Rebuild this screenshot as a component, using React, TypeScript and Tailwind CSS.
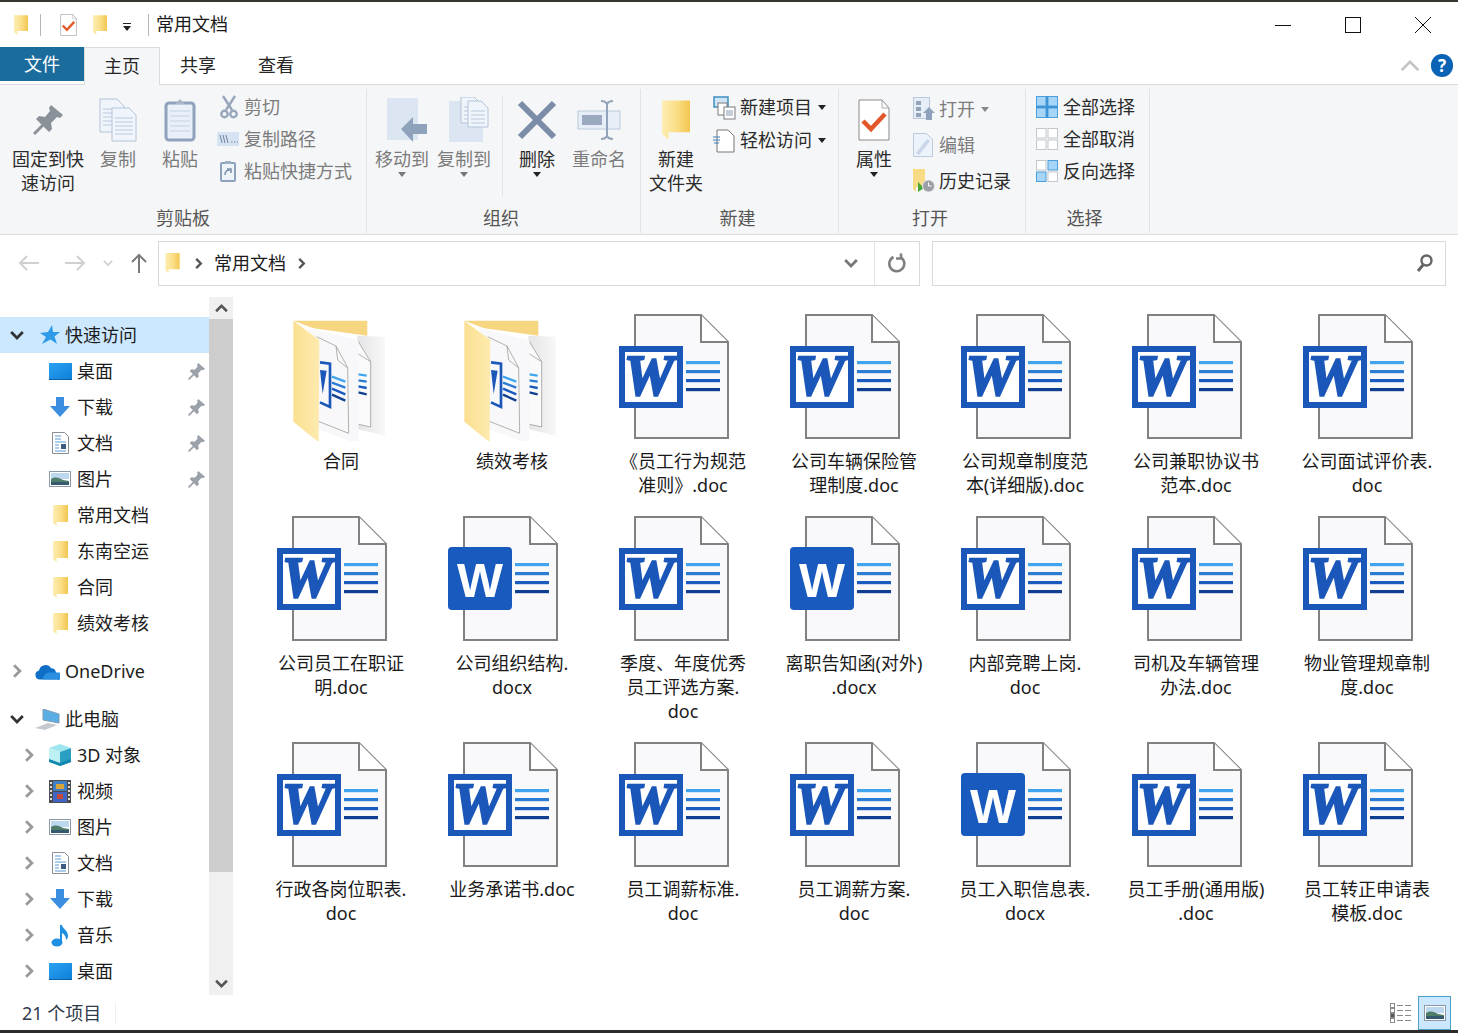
import type { ReactNode } from "react";

const files = [
  "合同",
  "绩效考核",
  "《员工行为规范\n准则》.doc",
  "公司车辆保险管\n理制度.doc",
  "公司规章制度范\n本(详细版).doc",
  "公司兼职协议书\n范本.doc",
  "公司面试评价表.\ndoc",
  "公司员工在职证\n明.doc",
  "公司组织结构.\ndocx",
  "季度、年度优秀\n员工评选方案.\ndoc",
  "离职告知函(对外)\n.docx",
  "内部竞聘上岗.\ndoc",
  "司机及车辆管理\n办法.doc",
  "物业管理规章制\n度.doc",
  "行政各岗位职表.\ndoc",
  "业务承诺书.doc",
  "员工调薪标准.\ndoc",
  "员工调薪方案.\ndoc",
  "员工入职信息表.\ndocx",
  "员工手册(通用版)\n.doc",
  "员工转正申请表\n模板.doc",
];

const Chev = ({ dir, size = 12, color = "#8a8a8a", width = 2 }: { dir: "up" | "down" | "right"; size?: number; color?: string; width?: number }) => (
  <svg width={size} height={size} viewBox="0 0 12 12" fill="none" stroke={color} strokeWidth={width}>
    {dir === "up" && <polyline points="1,8.5 6,3.5 11,8.5" />}
    {dir === "down" && <polyline points="1,3.5 6,8.5 11,3.5" />}
    {dir === "right" && <polyline points="3.5,1 8.5,6 3.5,11" />}
  </svg>
);

const Folder = ({ w = 15, h = 21 }: { w?: number; h?: number }) => (
  <svg width={w} height={h} viewBox="0 0 15 21">
    <defs>
      <linearGradient id="fold" x1="0" x2="1" y1="0" y2="0">
        <stop offset="0" stopColor="#fdeeb4" />
        <stop offset="0.55" stopColor="#fadd85" />
        <stop offset="1" stopColor="#f3c64f" />
      </linearGradient>
    </defs>
    <polygon points="0,0 15,0 15,17 3.5,17 3.5,21 0,18" fill="url(#fold)" />
  </svg>
);

const Pin = ({ size = 30, color = "#8b9199" }: { size?: number; color?: string }) => (
  <svg width={size} height={size} viewBox="0 0 30 30">
    <polygon points="18,0 30,10 27,13 24,12 18,18 19,24 16,27 3,14 6,11 12,12 17,6 16,3" fill={color} />
    <line x1="1" y1="29" x2="10" y2="20" stroke={color} strokeWidth="3" />
  </svg>
);

const Page = ({ x, y, w, h }: { x: number; y: number; w: number; h: number }) => (
  <g>
    <path d={`M${x} ${y}h${w - 7}l7 7v${h - 7}h-${w}z`} fill="#f0f5fb" stroke="#b4c3d8" />
    {[10, 14, 18, 22, 26, 30].filter((o) => o < h - 3).map((o) => (
      <line key={o} x1={x + 3} x2={x + w - 3} y1={y + o} y2={y + o} stroke="#b9c8dc" />
    ))}
  </g>
);

const CopyIcon = () => (
  <svg width="38" height="44" viewBox="0 0 38 44">
    <Page x={1} y={1} w={24} h={33} />
    <Page x={13} y={10} w={24} h={33} />
  </svg>
);

const PasteIcon = () => (
  <svg width="32" height="44" viewBox="0 0 32 44">
    <rect x="2" y="5" width="28" height="37" rx="3" fill="#e9f0f9" stroke="#8fa2bc" strokeWidth="3" />
    <path d="M11 6l5-5 5 5z" fill="#a9b7ca" />
    {[13, 18, 23, 28, 33].map((y) => (
      <line key={y} x1="6" x2="26" y1={y} y2={y} stroke="#c3d1e3" />
    ))}
  </svg>
);

const CutIcon = () => (
  <svg width="18" height="24" viewBox="0 0 18 24" fill="none" stroke="#97a6ba" strokeWidth="2.4">
    <line x1="3" y1="1" x2="12" y2="15" />
    <line x1="15" y1="1" x2="6" y2="15" />
    <circle cx="4.5" cy="19" r="3.2" />
    <circle cx="13.5" cy="19" r="3.2" />
  </svg>
);

const CopyPathIcon = () => (
  <svg width="22" height="14" viewBox="0 0 22 14">
    <rect width="22" height="14" fill="#d6e3f2" />
    <path d="M3 3l2 8M6 3l2 8M9 3l2 8" stroke="#6f83a0" strokeWidth="1" />
    <path d="M14 10h1.5M17 10h1.5M20 10h1" stroke="#6f83a0" />
  </svg>
);

const PasteLinkIcon = () => (
  <svg width="16" height="22" viewBox="0 0 16 22">
    <rect x="1" y="3" width="14" height="18" rx="1" fill="#eef3fa" stroke="#8fa2bc" strokeWidth="2" />
    <path d="M5 1h6v3H5z" fill="#9fb0c6" />
    <path d="M5 15c0-3 2-5 5-5M7 9h4v4" fill="none" stroke="#7f92ad" strokeWidth="1.6" />
  </svg>
);

const MoveIcon = () => (
  <svg className="ml-[10px]" width="42" height="46" viewBox="0 0 42 46">
    <rect x="1" y="1" width="31" height="42" fill="#dce6f3" />
    <polygon points="15,32 27,20 27,27 41,27 41,37 27,37 27,45" fill="#8fa2bc" />
  </svg>
);

const CopyToIcon = () => (
  <svg className="ml-[10px]" width="42" height="46" viewBox="0 0 42 46">
    <rect x="1" y="4" width="34" height="41" fill="#dce6f3" />
    <Page x={13} y={0} w={20} h={26} />
    <Page x={20} y={4} w={20} h={26} />
  </svg>
);

const DeleteIcon = () => (
  <svg width="40" height="40" viewBox="0 0 40 40" stroke="#7b8ca8" strokeWidth="6">
    <line x1="3" y1="3" x2="37" y2="37" />
    <line x1="37" y1="3" x2="3" y2="37" />
  </svg>
);

const RenameIcon = () => (
  <svg width="44" height="40" viewBox="0 0 44 40">
    <rect x="1" y="11" width="42" height="18" fill="#e7eef7" stroke="#bccadc" />
    <rect x="5" y="15" width="20" height="10" fill="#9aa9c0" />
    <path d="M24 1c3 0 5 1 6 3 1-2 3-3 6-3M24 39c3 0 5-1 6-3 1 2 3 3 6 3M30 4v32" fill="none" stroke="#93a3b9" strokeWidth="2" />
  </svg>
);

const NewItemIcon = () => (
  <svg width="24" height="24" viewBox="0 0 24 24">
    <rect x="1" y="1" width="14" height="10" fill="#cfe4f5" stroke="#3f8fc0" strokeWidth="1.5" />
    <rect x="5" y="7" width="9" height="12" fill="#fff" stroke="#7b7b7b" />
    <rect x="11" y="11" width="11" height="12" fill="#fff" stroke="#7b7b7b" />
    <path d="M13 15h7M13 17h7M13 19h7" stroke="#8a9bb0" />
  </svg>
);

const EasyAccessIcon = () => (
  <svg width="22" height="24" viewBox="0 0 22 24">
    <path d="M4 1h11l6 6v16H4z" fill="#fff" stroke="#777" />
    <path d="M0 8h7M0 11h7M1 14h5" stroke="#3a7fb5" />
  </svg>
);

const CheckDoc = ({ w = 32, h = 42 }: { w?: number; h?: number }) => (
  <svg width={w} height={h} viewBox="0 0 32 42">
    <path d="M1 1h23l7 8v32H1z" fill="#fff" stroke="#8a8a8a" />
    <path d="M24 1v8h7" fill="none" stroke="#a8a8a8" />
    <polyline points="5,22 13,30 27,15" fill="none" stroke="#e2582a" strokeWidth="4.5" />
  </svg>
);

const OpenIcon = () => (
  <svg width="22" height="24" viewBox="0 0 22 24">
    <rect x="0.5" y="0.5" width="16" height="21" fill="#e6eef8" stroke="#b9c8dc" />
    <path d="M3 4h5v4H3zM3 10h5v4H3zM3 16h5v4H3z" fill="#93a3b9" />
    <polygon points="10,16 16,10 22,16 19,16 19,23 13,23 13,16" fill="#8fa2bc" />
  </svg>
);

const EditIcon = () => (
  <svg width="20" height="24" viewBox="0 0 20 24">
    <path d="M0.5 0.5h13l6 6v17h-19z" fill="#edf3fa" stroke="#bccadc" />
    <path d="M3 20l11-14 3 2-11 14z" fill="#c9d7e8" />
  </svg>
);

const HistoryIcon = () => (
  <svg width="22" height="24" viewBox="0 0 22 24">
    <polygon points="0,0 12,0 12,18 3,18 3,23 0,20" fill="#f8dc85" />
    <polygon points="5,13 11,19 5,23" fill="#4ba63a" />
    <circle cx="15.5" cy="17" r="6" fill="#9b9fa5" stroke="#e8e8e8" />
    <path d="M15.5 13.5V17h3" stroke="#fff" fill="none" />
  </svg>
);

const SelectGrid = ({ on }: { on: number[] }) => (
  <svg width="22" height="22" viewBox="0 0 22 22">
    {[
      [0.5, 0.5],
      [12, 0.5],
      [0.5, 12],
      [12, 12],
    ].map(([x, y], i) => (
      <rect key={i} x={x} y={y} width="9.5" height="9.5" fill={on.includes(i) ? "#a6d5f8" : "#fff"} stroke={on.includes(i) ? "#4a9fdc" : "#c4c8cc"} />
    ))}
    {on.length === 4 && <path d="M11 0v22M0 11h22" stroke="#3d94d4" strokeWidth="2" />}
  </svg>
);

const Caret = ({ color = "#222" }: { color?: string }) => (
  <svg width="8" height="5" viewBox="0 0 8 5">
    <polygon points="0,0 8,0 4,5" fill={color} />
  </svg>
);

const Desktop = () => (
  <svg width="23" height="17" viewBox="0 0 23 17">
    <defs>
      <linearGradient id="desk" x1="0" x2="1" y1="0" y2="1">
        <stop offset="0" stopColor="#2aa2f4" />
        <stop offset="1" stopColor="#0f7fd8" />
      </linearGradient>
    </defs>
    <rect width="23" height="16" fill="url(#desk)" />
    <rect y="16" width="23" height="1" fill="#0b5fa8" />
  </svg>
);

const Download = () => (
  <svg width="20" height="20" viewBox="0 0 20 20">
    <polygon points="6,0 14,0 14,9 20,9 10,20 0,9 6,9" fill="#3c8fe0" />
  </svg>
);

const Docs = () => (
  <svg width="17" height="22" viewBox="0 0 17 22">
    <path d="M0.5 0.5h12l4 4v17h-16z" fill="#fff" stroke="#8b8f96" />
    <path d="M3 4h6M3 7h6M3 10h11M3 19h11M3 16h4M3 13h4" stroke="#5a9bd5" />
    <rect x="9" y="12" width="5" height="5" fill="#3d5a80" />
  </svg>
);

const Picture = () => (
  <svg width="22" height="16" viewBox="0 0 22 16">
    <rect x="0.5" y="0.5" width="21" height="15" fill="#fff" stroke="#8c98a6" />
    <rect x="2" y="2" width="18" height="6" fill="#bcd8ee" />
    <path d="M2 8c5-3 8-1 12 1l6 1v4H2z" fill="#4f7d68" />
    <rect x="2" y="11" width="18" height="3" fill="#355a70" />
  </svg>
);

const Star = () => (
  <svg className="ml-[5px]" width="20" height="20" viewBox="0 0 20 20">
    <polygon points="12,0 13,7 20,7 14.5,11.5 17,19 10.5,14.5 2,19 6,12 0,8 8,7" fill="#2f9be8" />
  </svg>
);

const Cloud = () => (
  <svg width="25" height="17" viewBox="0 0 25 17">
    <path d="M5 16.5a4.5 4.5 0 0 1-1-8.9A6.5 6.5 0 0 1 16 5.2a5 5 0 0 1 5 4.4 3.6 3.6 0 0 1 0 6.9z" fill="#0f6fc6" />
    <path d="M8 16.5c0-4 3-7 7-7h9.500a3.600 3.600 0 0 1-3.500 7z" fill="#2a8fe0" />
  </svg>
);

const Computer = () => (
  <svg width="25" height="21" viewBox="0 0 25 21">
    <polygon points="8,0 24,5 24,14 8,11" fill="#5aaee4" stroke="#7f9cb2" />
    <polygon points="0,19 13,14 22,16 10,21" fill="#c4c9cf" />
  </svg>
);

const Cube = () => (
  <svg width="22" height="22" viewBox="0 0 22 22">
    <polygon points="11,0 22,4 11,8 0,4" fill="#9fe6ef" />
    <polygon points="0,4 11,8 11,22 0,18" fill="#bdf0f3" />
    <polygon points="22,4 11,8 11,22 22,18" fill="#2a9fc2" />
    <polygon points="0,15 11,19 22,15 22,18 11,22 0,18" fill="#0e86ad" />
  </svg>
);

const Film = () => (
  <svg width="22" height="23" viewBox="0 0 22 23">
    <rect width="22" height="23" fill="#4b4b4b" />
    <rect x="4" y="1" width="14" height="10" fill="#3f7fc4" />
    <rect x="4" y="12" width="14" height="10" fill="#3f66c4" />
    <rect x="7" y="4" width="8" height="5" fill="#d8a53a" />
    <rect x="8" y="14" width="6" height="5" fill="#c64a3a" />
    {[2, 6, 10, 14, 18].map((y) => (
      <g key={y}>
        <rect x="1" y={y} width="2" height="2" fill="#ddd" />
        <rect x="19" y={y} width="2" height="2" fill="#ddd" />
      </g>
    ))}
  </svg>
);

const Music = () => (
  <svg width="18" height="23" viewBox="0 0 18 23">
    <ellipse cx="6" cy="18.500" rx="5.500" ry="4" fill="#1f8fe0" />
    <path d="M9 1h2c.5 4 6 5 6 11 0 2-1 3-2 4 0-4-2-6-4-7v10H9z" fill="#1f8fe0" />
  </svg>
);

const FolderBig = () => (
  <svg width="128" height="128" viewBox="21 24 384 384">
    <defs>
      <linearGradient id="flap" x1="0" x2="1" y1="0" y2="0">
        <stop offset="0" stopColor="#fbe092" />
        <stop offset="1" stopColor="#fdeaae" />
      </linearGradient>
      <linearGradient id="sheet" x1="0" x2="1" y1="0" y2="0">
        <stop offset="0" stopColor="#e4e4e6" />
        <stop offset="1" stopColor="#f8f8f9" />
      </linearGradient>
    </defs>
    <polygon points="70,47 292,47 292,92 130,70" fill="#f6d680" />
    <polygon points="262,92 345,95 345,392 262,372" fill="url(#sheet)" />
    <polygon points="110,68 262,105 302,170 302,366 262,356" fill="#fafafb" />
    <path d="M262 105l40 65v196l-36-8M262 105v40l40 25" fill="none" stroke="#8d8d85" strokeWidth="2" />
    {[
      [265, 208, 290, 212, "#41a5ee"],
      [265, 226, 290, 230, "#2b7cd3"],
      [265, 244, 290, 249, "#185abd"],
      [265, 262, 290, 268, "#103f91"],
    ].map(([x1, y1, x2, y2, c], i) => (
      <line key={i} x1={x1} y1={y1} x2={x2} y2={y2} stroke={c as string} strokeWidth="7" />
    ))}
    <polygon points="118,72 265,105 265,418 140,372" fill="#f8f8fa" />
    <path d="M140 95l58 28 35 65 3 197-96-38" fill="none" stroke="#8d8d85" strokeWidth="2" />
    <path d="M198 123l5 42 30 24" fill="none" stroke="#8d8d85" strokeWidth="2" />
    <path d="M150 172l30 4v130l-30-14" fill="none" stroke="#1b57b9" strokeWidth="8" />
    <path d="M150 195l20 2-12 70z" fill="#1b57b9" />
    {[
      [186, 215, 226, 230, "#41a5ee"],
      [186, 233, 226, 248, "#2b7cd3"],
      [186, 251, 226, 268, "#185abd"],
      [186, 269, 226, 287, "#103f91"],
    ].map(([x1, y1, x2, y2, c], i) => (
      <line key={i} x1={x1} y1={y1} x2={x2} y2={y2} stroke={c as string} strokeWidth="7" />
    ))}
    <polygon points="70,47 148,105 146,412 70,350" fill="url(#flap)" />
  </svg>
);

const WordDoc = ({ modern }: { modern: boolean }) => (
  <svg width="128" height="128" viewBox="0 0 128 128">
    <path d="M16 2h66l27 27v96H16z" fill="#f9f9fb" stroke="#818181" strokeWidth="2" />
    <path d="M82 2v27h27" fill="#fff" stroke="#818181" strokeWidth="2" />
    {modern ? (
      <>
        <rect x="0" y="32" width="64" height="63" rx="4" fill="#185abd" />
        <text x="9" y="82" fontSize="49" fontWeight="700" textLength="46" lengthAdjust="spacingAndGlyphs" className="fill-white font-['Liberation_Sans']">W</text>
      </>
    ) : (
      <>
        <rect x="3" y="36" width="58" height="56" fill="#fff" stroke="#1b57b9" strokeWidth="6" />
        <text x="5" y="82" fontSize="56" fontWeight="700" fontStyle="italic" stroke="#1b57b9" strokeWidth="2.4" className="fill-[#1b57b9] font-['Liberation_Serif']">W</text>
      </>
    )}
    <rect x="67" y="48" width="34" height="3.200" fill="#41a5ee" />
    <rect x="67" y="57" width="34" height="3.200" fill="#2b7cd3" />
    <rect x="67" y="66" width="34" height="3.200" fill="#185abd" />
    <rect x="67" y="75" width="34" height="3.200" fill="#103f91" />
  </svg>
);

const LargeBtn = ({ label, icon, w, dim = false, caret }: { label: string; icon: ReactNode; w: string; dim?: boolean; caret?: string }) => (
  <div className={`flex shrink-0 flex-col items-center ${w}`}>
    <div className="flex h-12 items-center justify-center">{icon}</div>
    <div className={`relative mt-[3px] text-center text-[18px] leading-6 whitespace-pre-line ${dim ? "text-[#7c7c7c]" : "text-[#2b2b2b]"}`}>
      {label}
      {caret && (
        <span className="absolute -bottom-[6px] left-1/2 flex -translate-x-1/2">
          <Caret color={caret} />
        </span>
      )}
    </div>
  </div>
);

const SmallBtn = ({ label, icon, box, rowH, dim = false, caret }: { label: string; icon: ReactNode; box: string; rowH: string; dim?: boolean; caret?: string }) => (
  <div className={`flex items-center ${rowH}`}>
    <div className={`flex shrink-0 items-center justify-start ${box}`}>{icon}</div>
    <span className={`text-[18px] whitespace-nowrap ${dim ? "text-[#7c7c7c]" : "text-[#2b2b2b]"}`}>{label}</span>
    {caret && (
      <span className="ml-[6px] flex">
        <Caret color={caret} />
      </span>
    )}
  </div>
);

const Group = ({ title, w, titlePad = "", children }: { title: string; w: string; titlePad?: string; children: ReactNode }) => (
  <div className={`flex h-full shrink-0 flex-col ${w}`}>
    <div className="flex h-[117px] border-r border-[#e2e3e4]">{children}</div>
    <div className={`h-[27px] border-r border-[#e2e3e4] text-center text-[18px] leading-6 text-[#555] ${titlePad}`}>{title}</div>
  </div>
);

const NavRow = ({ label, icon, child = false, open = false, chevron = true, pin = false, active = false }: { label: string; icon: ReactNode; child?: boolean; open?: boolean; chevron?: boolean; pin?: boolean; active?: boolean }) => (
  <div className={`flex h-9 items-center text-[18px] text-[#1c1c1c] ${child ? "pl-[17px]" : "pl-[5px]"} ${active ? "bg-[#cce8ff]" : ""}`}>
    <div className="flex w-6 shrink-0 justify-center">
      {chevron && <Chev dir={open ? "down" : "right"} size={14} color={open ? "#333" : "#9a9a9a"} width={2.4} />}
    </div>
    <div className={`flex shrink-0 items-center justify-center ${child ? "w-[36px] pl-[2px]" : "w-[36px]"}`}>{icon}</div>
    <span>{label}</span>
    {pin && (
      <span className="mr-[4px] ml-auto flex">
        <Pin size={17} color="#9aa1a9" />
      </span>
    )}
  </div>
);

export default function App() {
  return (
    <div className="flex h-[1033px] w-[1458px] flex-col overflow-hidden bg-white font-['Noto_Sans','Noto_Sans_CJK_SC',sans-serif]">
      <div className="h-[2px] shrink-0 bg-[#39362f]" />

      {/* title bar */}
      <div className="flex h-[45px] shrink-0 items-center">
        <div className="ml-[14px] flex"><Folder w={14} h={20} /></div>
        <div className="ml-[12px] h-[22px] w-px bg-[#b5b5b5]" />
        <div className="ml-[19px] flex"><CheckDoc w={17} h={22} /></div>
        <div className="ml-[16px] flex"><Folder w={14} h={20} /></div>
        <div className="ml-[16px] flex flex-col items-center gap-[2px] pt-[4px]">
          <div className="h-px w-2 bg-[#222]" />
          <Caret />
        </div>
        <div className="ml-[17px] h-[22px] w-px bg-[#b5b5b5]" />
        <span className="ml-[7px] text-[18px] text-[#1a1a1a]">常用文档</span>
        <div className="ml-auto flex">
          <div className="flex h-[45px] w-[70px] items-center justify-center">
            <svg width="16" height="16" viewBox="0 0 16 16"><line x1="0" x2="16" y1="8.500" y2="8.500" stroke="#111" /></svg>
          </div>
          <div className="flex h-[45px] w-[70px] items-center justify-center">
            <svg width="16" height="16" viewBox="0 0 16 16"><rect x="0.500" y="0.500" width="15" height="15" fill="none" stroke="#111" /></svg>
          </div>
          <div className="mr-0 flex h-[45px] w-[70px] items-center justify-center">
            <svg width="16" height="16" viewBox="0 0 16 16" stroke="#111"><line x1="0" y1="0" x2="16" y2="16" /><line x1="16" y1="0" x2="0" y2="16" /></svg>
          </div>
        </div>
      </div>

      {/* tabs */}
      <div className="flex h-[37px] shrink-0 items-start text-[18px] text-[#262626]">
        <div className="flex h-[34px] w-[84px] items-center justify-center bg-[#1a6c9c] text-white">文件</div>
        <div className="relative z-10 flex h-[38px] w-[76px] items-center justify-center border-x border-t border-[#dadbdc] bg-[#f5f6f7]">主页</div>
        <div className="flex h-[37px] w-[76px] items-center justify-center">共享</div>
        <div className="flex h-[37px] w-[80px] items-center justify-center">查看</div>
        <div className="mr-[5px] ml-auto flex h-[37px] items-center gap-[11px]">
          <Chev dir="up" size={20} color="#c4c4c4" width={1.6} />
          <div className="flex h-[23px] w-[22px] items-center justify-center rounded-full bg-[#0a63b5] text-[17px] font-bold text-white">?</div>
        </div>
      </div>

      {/* ribbon */}
      <div className="flex h-[151px] shrink-0 border-y border-[#dadbdc] bg-[#f5f6f7] pt-[4px]">
        <Group title="剪贴板" w="w-[367px]">
          <div className="flex pt-[7px] pl-[4px]">
            <LargeBtn w="w-[88px]" label={"固定到快\n速访问"} icon={<Pin />} />
            <LargeBtn w="w-[52px]" dim label="复制" icon={<CopyIcon />} />
            <LargeBtn w="w-[72px]" dim label="粘贴" icon={<PasteIcon />} />
          </div>
          <div className="pt-[2px]">
            <SmallBtn dim box="w-[28px] pl-[4px]" rowH="h-8" label="剪切" icon={<CutIcon />} />
            <SmallBtn dim box="w-[28px] pl-[1px]" rowH="h-8" label="复制路径" icon={<CopyPathIcon />} />
            <SmallBtn dim box="w-[28px] pl-[4px]" rowH="h-8" label="粘贴快捷方式" icon={<PasteLinkIcon />} />
          </div>
        </Group>
        <Group title="组织" w="w-[274px]" titlePad="pr-[5px]">
          <div className="flex pt-[7px] pl-[6px]">
            <LargeBtn w="w-[58px]" dim label="移动到" caret="#777" icon={<MoveIcon />} />
            <LargeBtn w="w-[66px]" dim label="复制到" caret="#777" icon={<CopyToIcon />} />
            <div className="mr-[4px] ml-[5px] h-[100px] w-px bg-[#e2e3e4]" />
            <LargeBtn w="w-[60px]" label="删除" caret="#222" icon={<DeleteIcon />} />
            <LargeBtn w="w-[64px]" dim label="重命名" icon={<RenameIcon />} />
          </div>
        </Group>
        <Group title="新建" w="w-[198px]" titlePad="pr-[4px]">
          <div className="flex pt-[7px] pl-[5px]">
            <LargeBtn w="w-[60px]" label={"新建\n文件夹"} icon={<Folder w={28} h={40} />} />
          </div>
          <div className="pt-[2px] pl-[7px]">
            <SmallBtn box="w-[27px]" rowH="h-[33px]" label="新建项目" caret="#222" icon={<NewItemIcon />} />
            <SmallBtn box="w-[27px]" rowH="h-[33px]" label="轻松访问" caret="#222" icon={<EasyAccessIcon />} />
          </div>
        </Group>
        <Group title="打开" w="w-[187px]" titlePad="pr-[4px]">
          <div className="flex pt-[7px] pl-[10px]">
            <LargeBtn w="w-[50px]" label="属性" caret="#222" icon={<CheckDoc />} />
          </div>
          <div className="pt-[2px] pl-[14px]">
            <SmallBtn dim box="w-[26px]" rowH="h-9" label="打开" caret="#888" icon={<OpenIcon />} />
            <SmallBtn dim box="w-[26px]" rowH="h-9" label="编辑" icon={<EditIcon />} />
            <SmallBtn box="w-[26px]" rowH="h-9" label="历史记录" icon={<HistoryIcon />} />
          </div>
        </Group>
        <Group title="选择" w="w-[124px]" titlePad="pr-[6px]">
          <div className="pt-[2px] pl-[10px]">
            <SmallBtn box="w-[27px]" rowH="h-8" label="全部选择" icon={<SelectGrid on={[0, 1, 2, 3]} />} />
            <SmallBtn box="w-[27px]" rowH="h-8" label="全部取消" icon={<SelectGrid on={[]} />} />
            <SmallBtn box="w-[27px]" rowH="h-8" label="反向选择" icon={<SelectGrid on={[1, 2]} />} />
          </div>
        </Group>
      </div>

      {/* address row */}
      <div className="flex h-[56px] shrink-0 items-center">
        <div className="flex w-[158px] items-center pl-[18px]">
          <svg width="22" height="18" viewBox="0 0 22 18" fill="none" stroke="#d0d0d0" strokeWidth="2"><path d="M21 9H2M9 2L2 9l7 7" /></svg>
          <div className="w-[24px]" />
          <svg width="22" height="18" viewBox="0 0 22 18" fill="none" stroke="#d0d0d0" strokeWidth="2"><path d="M1 9h19M13 2l7 7-7 7" /></svg>
          <div className="w-[17px]" />
          <Chev dir="down" size={10} color="#d0d0d0" />
          <div className="w-[17px]" />
          <svg width="18" height="20" viewBox="0 0 18 20" fill="none" stroke="#7a7a7a" strokeWidth="2"><path d="M9 20V2M2 9l7-7 7 7" /></svg>
        </div>
        <div className="flex h-[45px] w-[762px] items-center border border-[#d9d9d9]">
          <div className="ml-[6px] flex"><Folder w={15} h={20} /></div>
          <div className="ml-[13px] flex"><Chev dir="right" size={11} color="#555" width={2.6} /></div>
          <span className="ml-[10px] text-[18px] text-[#1a1a1a]">常用文档</span>
          <div className="ml-[10px] flex"><Chev dir="right" size={11} color="#555" width={2.6} /></div>
          <div className="ml-auto flex h-full items-center">
            <Chev dir="down" size={14} color="#777" width={2.4} />
            <div className="ml-[16px] h-full w-px bg-[#e3e3e3]" />
            <div className="flex w-[44px] justify-center">
              <svg width="18" height="20" viewBox="0 0 18 20" fill="none" stroke="#7f7f7f" strokeWidth="2.600"><path d="M13 4.500a7.500 7.500 0 1 1-7.500-.5M13 .5v5h-5" /></svg>
            </div>
          </div>
        </div>
        <div className="ml-[12px] flex h-[45px] w-[514px] items-center justify-end border border-[#d9d9d9] pr-[12px]">
          <svg width="17" height="19" viewBox="0 0 17 19" fill="none" stroke="#666" strokeWidth="2.400"><circle cx="10.500" cy="6.500" r="5" /><path d="M7 11l-5 6" strokeWidth="3" /></svg>
        </div>
      </div>

      {/* main */}
      <div className="flex min-h-0 flex-1">
        <div className="flex w-[234px] shrink-0 pt-[6px]">
          <div className="w-[209px] shrink-0 pt-[20px]">
            <NavRow active open label="快速访问" icon={<Star />} />
            <NavRow child chevron={false} pin label="桌面" icon={<Desktop />} />
            <NavRow child chevron={false} pin label="下载" icon={<Download />} />
            <NavRow child chevron={false} pin label="文档" icon={<Docs />} />
            <NavRow child chevron={false} pin label="图片" icon={<Picture />} />
            <NavRow child chevron={false} label="常用文档" icon={<Folder />} />
            <NavRow child chevron={false} label="东南空运" icon={<Folder />} />
            <NavRow child chevron={false} label="合同" icon={<Folder />} />
            <NavRow child chevron={false} label="绩效考核" icon={<Folder />} />
            <div className="h-3" />
            <NavRow label="OneDrive" icon={<Cloud />} />
            <div className="h-3" />
            <NavRow open label="此电脑" icon={<Computer />} />
            <NavRow child label="3D 对象" icon={<Cube />} />
            <NavRow child label="视频" icon={<Film />} />
            <NavRow child label="图片" icon={<Picture />} />
            <NavRow child label="文档" icon={<Docs />} />
            <NavRow child label="下载" icon={<Download />} />
            <NavRow child label="音乐" icon={<Music />} />
            <NavRow child label="桌面" icon={<Desktop />} />
          </div>
          <div className="flex h-[698px] w-[24px] shrink-0 flex-col bg-[#f0f0f0]">
            <div className="flex h-[22px] items-center justify-center"><Chev dir="up" size={13} color="#555" width={2.4} /></div>
            <div className="h-[553px] bg-[#cdcdcd]" />
            <div className="mt-auto flex h-[23px] items-center justify-center"><Chev dir="down" size={13} color="#555" width={2.4} /></div>
          </div>
        </div>

        <div className="grid flex-1 auto-rows-min grid-cols-[repeat(7,171px)] pt-[22px] pl-[21.5px]">
          {files.map((name) => (
            <div key={name} className="flex flex-col items-center pb-[18px]">
              {name.includes(".") ? <WordDoc modern={name.endsWith("docx")} /> : <FolderBig />}
              <div className="mt-[8px] text-center text-[18px] leading-6 whitespace-pre-line text-[#1a1a1a]">{name}</div>
            </div>
          ))}
        </div>
      </div>

      {/* status bar */}
      <div className="flex h-[34px] shrink-0 items-center">
        <span className="ml-[22px] text-[18px] text-[#2f3a4a]">21 个项目</span>
        <div className="ml-[14px] h-[22px] w-px bg-[#f0f0f0]" />
        <div className="mr-[7px] ml-auto flex items-center">
          <svg width="22" height="20" viewBox="0 0 22 20" fill="none" stroke="#8a8a8a">
            {[0.5, 5.5, 10.5, 15.5].map((y) => (
              <g key={y}>
                <rect x="0.500" y={y} width="4" height="4" fill={y === 10.5 ? "#555" : "#fff"} />
                <path d={`M7 ${y + 2}h6M15 ${y + 2}h6`} />
              </g>
            ))}
          </svg>
          <div className="ml-[6px] flex h-[34px] w-[33px] items-center justify-center border border-[#4aa0c8] bg-[#cce8ff]">
            <Picture />
          </div>
        </div>
      </div>
      <div className="h-[3px] shrink-0 bg-[#2e2c2a]" />
    </div>
  );
}
